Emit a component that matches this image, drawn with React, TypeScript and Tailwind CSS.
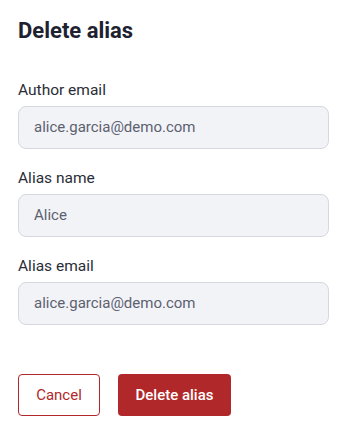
const fields = [
	{ label: "Author email", value: "alice.garcia@demo.com" },
	{ label: "Alias name", value: "Alice" },
	{ label: "Alias email", value: "alice.garcia@demo.com" },
];

const App = () => {
	return (
		<div className="min-h-[437px] w-[350px] bg-white px-[18px] pt-[17px] font-['Roboto',sans-serif]">
			<h1 className="text-[22px] font-bold leading-[28px] text-[#1e2230]">Delete alias</h1>

			<div className="mt-[35px] flex flex-col gap-[19px]">
				{fields.map((field) => (
					<div key={field.label} className="flex flex-col gap-[6px]">
						<label className="text-[15.5px] leading-[20px] text-[#2a2d36]">{field.label}</label>
						<div className="flex h-[43px] w-[311px] items-center rounded-[8px] border border-[#d5d8de] bg-[#f2f3f7] px-[15px] text-[15px] text-[#5c6170]">
							{field.value}
						</div>
					</div>
				))}
			</div>

			<div className="mt-[49px] flex gap-[18px]">
				<button
					type="button"
					className="h-[42px] w-[82px] rounded-[4px] border border-[#b1282a] bg-white text-[15px] text-[#b1282a]"
				>
					Cancel
				</button>
				<button
					type="button"
					className="h-[42px] w-[113px] rounded-[4px] bg-[#b1282a] text-[15px] font-medium text-white"
				>
					Delete alias
				</button>
			</div>
		</div>
	);
};

export default App;
